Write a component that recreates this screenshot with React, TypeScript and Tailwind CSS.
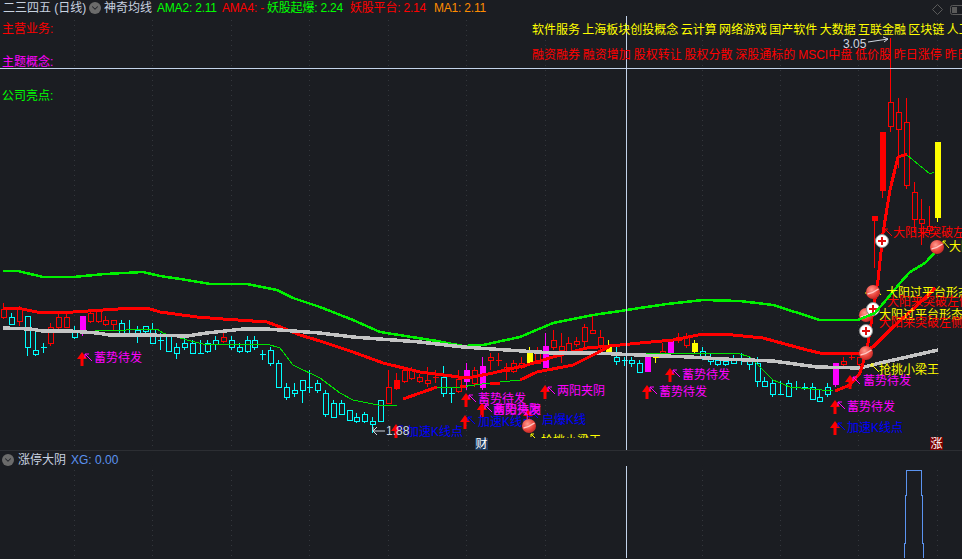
import { ChevronDown } from "lucide-react";

type Kind = "r" | "c" | "m" | "y" | "f";
type Candle = [number, number, number, number, number, Kind];

const BG = "#1b1d22";
const COLORS: Record<Kind, string> = { r: "#ff0000", c: "#00ffff", m: "#ff00ff", y: "#ffff00", f: "#ff0000" };

// candles as read off the crops: x, wick top, body top, body bottom, wick bottom
const LEFT: Candle[] = [
  [10, 129, 148, 170, 178, "r"], [34, 160, 170, 191, 191, "c"], [58, 138, 148, 182, 198, "r"],
  [82, 168, 168, 260, 288, "c"], [106, 215, 271, 282, 288, "c"], [130, 250, 262, 262, 279, "c"],
  [151, 190, 200, 250, 258, "r"], [175, 160, 170, 200, 208, "r"], [199, 155, 170, 200, 200, "r"],
  [223, 198, 212, 230, 238, "c"], [247, 168, 168, 212, 228, "m"], [271, 148, 160, 182, 188, "r"],
  [295, 148, 152, 182, 188, "r"], [316, 168, 181, 191, 198, "r"], [340, 181, 181, 191, 210, "r"],
  [364, 180, 190, 220, 220, "c"], [388, 180, 220, 220, 220, "c"], [412, 198, 210, 228, 248, "c"],
  [436, 198, 198, 212, 218, "c"], [457, 190, 208, 250, 250, "c"], [481, 220, 240, 240, 270, "c"],
  [505, 228, 228, 272, 272, "c"], [529, 250, 260, 280, 298, "c"], [553, 230, 250, 260, 270, "c"],
  [577, 240, 250, 280, 280, "c"], [601, 240, 280, 280, 280, "c"], [622, 240, 250, 272, 278, "c"],
  [646, 228, 240, 252, 270, "c"], [670, 220, 230, 242, 248, "r"], [694, 228, 240, 260, 270, "c"],
  [718, 250, 260, 272, 280, "c"], [742, 228, 240, 272, 280, "c"], [763, 228, 240, 260, 270, "c"],
  [787, 270, 282, 282, 300, "c"], [811, 260, 270, 310, 318, "c"], [835, 300, 310, 382, 382, "c"],
  [859, 370, 382, 412, 420, "c"], [883, 370, 391, 400, 410, "c"], [907, 360, 361, 391, 428, "c"],
  [928, 330, 382, 382, 400, "c"], [952, 360, 370, 391, 400, "c"],
];
const MIDDLE: Candle[] = [
  [16, 270, 280, 342, 350, "c"], [40, 300, 310, 352, 352, "c"], [64, 300, 310, 342, 342, "c"],
  [88, 330, 330, 360, 360, "c"], [109, 340, 352, 362, 368, "c"], [133, 335, 342, 362, 368, "c"],
  [157, 352, 362, 372, 400, "c"], [181, 300, 301, 362, 362, "c"], [205, 210, 262, 310, 310, "r"],
  [229, 220, 240, 264, 270, "f"], [253, 200, 210, 244, 250, "r"], [274, 200, 210, 234, 240, "r"],
  [298, 222, 232, 244, 250, "r"], [322, 200, 240, 250, 260, "r"], [346, 210, 232, 232, 250, "r"],
  [370, 198, 232, 280, 290, "c"], [394, 262, 278, 278, 308, "c"], [415, 210, 238, 272, 280, "r"],
  [439, 190, 210, 242, 270, "m"], [463, 200, 210, 250, 262, "r"], [487, 170, 198, 262, 270, "m"],
  [511, 160, 170, 180, 210, "r"], [535, 160, 180, 180, 198, "r"], [559, 190, 200, 212, 240, "r"],
  [580, 180, 190, 212, 218, "r"], [604, 170, 190, 200, 208, "r"], [628, 140, 160, 192, 192, "y"],
  [652, 140, 152, 190, 192, "r"], [676, 100, 138, 200, 200, "m"], [700, 90, 120, 140, 150, "r"],
  [724, 100, 138, 150, 190, "r"], [745, 110, 130, 152, 160, "r"], [769, 110, 122, 132, 140, "r"],
  [793, 72, 80, 122, 140, "r"], [817, 48, 90, 100, 100, "r"], [841, 90, 110, 140, 150, "r"],
  [865, 120, 140, 152, 160, "y"], [887, 140, 170, 182, 195, "c"], [911, 170, 180, 180, 198, "c"],
  [934, 170, 180, 190, 200, "c"], [958, 180, 190, 215, 218, "c"],
];
const RIGHT: Candle[] = [
  [22, 190, 200, 242, 242, "m"], [46, 190, 200, 200, 218, "y"], [67, 160, 182, 190, 190, "r"],
  [91, 150, 150, 185, 190, "m"], [115, 130, 140, 150, 160, "r"], [139, 130, 140, 165, 175, "r"],
  [163, 150, 160, 182, 190, "y"], [187, 170, 182, 200, 210, "c"], [211, 190, 200, 212, 225, "c"],
  [232, 200, 210, 222, 228, "c"], [256, 200, 212, 222, 228, "c"], [280, 195, 210, 220, 220, "c"],
  [304, 190, 205, 205, 225, "c"], [328, 200, 210, 222, 240, "c"], [352, 200, 220, 272, 290, "c"],
  [373, 262, 272, 288, 290, "c"], [397, 270, 280, 312, 320, "c"], [421, 272, 312, 312, 312, "c"],
  [445, 270, 280, 318, 320, "c"], [469, 272, 292, 292, 300, "c"], [493, 280, 292, 292, 300, "c"],
  [517, 280, 292, 328, 330, "c"], [538, 300, 322, 332, 332, "c"], [562, 280, 292, 312, 320, "c"],
  [586, 220, 220, 282, 290, "m"], [610, 200, 212, 222, 230, "r"], [634, 190, 200, 200, 210, "r"],
  [658, 200, 200, 222, 230, "r"],
];
const SPIKE: Candle[] = [
  [103, 467, 467, 480, 625, "f"], [127, 216, 216, 390, 415, "f"], [151, -66, 127, 197, 215, "r"],
  [175, 113, 157, 207, 325, "r"], [199, 113, 187, 376, 386, "r"], [223, 365, 397, 478, 520, "r"],
  [244, 417, 478, 488, 555, "r"], [268, 438, 498, 510, 525, "r"], [292, 246, 246, 470, 486, "y"],
];

const GROUPS: [number, number, Candle[]][] = [
  [0, 260, LEFT],
  [320, 300, MIDDLE],
  [640, 290, RIGHT],
  [840, 60, SPIKE],
];

const GREEN_BAND = "3,271 18,271 43,277 73,277 105,274 143,272 160,276 187,280 210,284 247,284 277,290 293,298 320,307 353,320 380,332 437,341 463,346 483,345 520,337 553,323 593,315 627,310 640,308 667,304 703,300 740,301 773,305 820,320 858,320 875,313 892,293 900,283 910,272 925,263 937,250";
const RED_BAND = "3,308 17,308 37,312 73,312 103,310 133,308 147,308 160,312 197,317 223,319 267,322 283,328 300,335 320,341 353,352 383,363 420,372 467,378 493,373 527,365 553,357 587,348 620,345 640,343 673,340 703,334 733,335 763,338 807,350 820,353 860,353 873,347 893,327 923,300 935,288";
const GRAY_BAND = "3,328 30,329 43,331 70,331 97,333 110,335 147,335 187,336 207,333 243,329 267,329 293,331 320,333 353,337 420,342 463,347 507,350 553,353 593,353 640,355 690,357 723,359 773,361 817,367 860,368 880,363 907,357 938,350";
const THIN_GREEN = [
  "8,328 30,328",
  "95,331 157,329 163,333 187,340 203,344 267,344 280,348 293,365 320,378 340,393 353,400 383,406 397,405",
  "437,387 460,387 490,383",
  "500,382 520,380",
  "597,353 660,353 737,353 750,357 773,380 790,387 833,391",
  "907,155 930,174 934,172",
];
const RED_RISE = [
  "403,399 437,387",
  "460,386 466,386",
  "490,384 500,383",
  "520,380 537,372 573,365 597,353 612,345",
  "835,391 850,385 860,373 867,350 870,330 878,280 883,233 890,190 898,157 907,154",
];

const GRID_X = [74, 152, 231, 309, 388, 466, 545, 702, 780, 858, 937];

type Mark = { ax: number; ay: number; x: number; y: number; text: string; color: string };
const MAGENTA = "#ff00ff";
const BLUE = "#0000ff";
const MARKS: Mark[] = [
  { ax: 82, ay: 359, x: 94, y: 358, text: "蓄势待发", color: MAGENTA },
  { ax: 396, ay: 431, x: 407, y: 432, text: "加速K线点", color: BLUE },
  { ax: 466, ay: 400, x: 478, y: 399, text: "蓄势待发", color: MAGENTA },
  { ax: 482, ay: 410, x: 493, y: 410, text: "蓄势待发", color: MAGENTA },
  { ax: 482, ay: 410, x: 493, y: 410, text: "两阳夹阴", color: MAGENTA },
  { ax: 465, ay: 422, x: 478, y: 422, text: "加速K线点", color: BLUE },
  { ax: 528, ay: 416, x: 542, y: 420, text: "启爆K线", color: BLUE },
  { ax: 545, ay: 392, x: 557, y: 391, text: "两阳夹阴", color: MAGENTA },
  { ax: 670, ay: 375, x: 682, y: 375, text: "蓄势待发", color: MAGENTA },
  { ax: 647, ay: 392, x: 659, y: 392, text: "蓄势待发", color: MAGENTA },
  { ax: 835, ay: 407, x: 847, y: 407, text: "蓄势待发", color: MAGENTA },
  { ax: 835, ay: 428, x: 847, y: 428, text: "加速K线点", color: BLUE },
  { ax: 850, ay: 382, x: 863, y: 381, text: "蓄势待发", color: MAGENTA },
];

const NOTES = [
  { x: 893, y: 233, text: "大阳来突破左侧", color: "#ff0000" },
  { x: 949, y: 247, text: "大阳过平台形态", color: "#ffff00" },
  { x: 886, y: 293, text: "大阳过平台形态", color: "#ffff00" },
  { x: 887, y: 302, text: "大阳来突破左侧", color: "#ff0000" },
  { x: 879, y: 315, text: "大阳过平台形态", color: "#ffff00" },
  { x: 879, y: 323, text: "大阳来突破左侧", color: "#ff0000" },
  { x: 879, y: 370, text: "抢挑小梁王", color: "#ffff00" },
];

function Candles() {
  return (
    <g shapeRendering="crispEdges">
      {GROUPS.flatMap(([ox, oy, list]) =>
        list.map(([x, wt, bt, bb, wb, kind]) => {
          const cx = Math.round(ox + x / 3) + 0.5;
          const top = Math.round(oy + bt / 3) + 0.5;
          const bottom = Math.round(oy + bb / 3) + 0.5;
          const solid = kind === "m" || kind === "y" || kind === "f";
          return (
            <g key={`${ox}-${x}`} stroke={COLORS[kind]}>
              <line x1={cx} x2={cx} y1={oy + wt / 3} y2={oy + wb / 3} />
              {top === bottom ? (
                <line x1={cx - 3} x2={cx + 3} y1={top} y2={top} />
              ) : (
                <rect x={cx - 2.5} y={top} width={5} height={bottom - top} fill={solid ? COLORS[kind] : BG} />
              )}
            </g>
          );
        }),
      )}
    </g>
  );
}

function UpArrow({ x, y, color }: { x: number; y: number; color: string }) {
  return (
    <g>
      <polygon
        fill="#ff0000"
        points={`${x},${y - 7} ${x + 5},${y} ${x + 1.5},${y} ${x + 1.5},${y + 7} ${x - 1.5},${y + 7} ${x - 1.5},${y} ${x - 5},${y}`}
      />
      <path d={`M${x + 10} ${y + 2}L${x + 3} ${y - 5}M${x + 3} ${y - 5}h4M${x + 3} ${y - 5}v4`} stroke={color} fill="none" />
    </g>
  );
}

function Ball({ x, y }: { x: number; y: number }) {
  return (
    <g>
      <circle cx={x} cy={y} r={7} fill="url(#ball)" />
      <path d={`M${x - 5.5} ${y + 2}Q${x} ${y + 1} ${x + 5.5} ${y - 3}`} stroke="#ffc8c4" strokeWidth={1.5} fill="none" />
    </g>
  );
}

function PlusBall({ x, y }: { x: number; y: number }) {
  return (
    <g>
      <circle cx={x} cy={y} r={6.5} fill="#ffffff" stroke="#8a8a8a" />
      <path d={`M${x - 4} ${y}h8M${x} ${y - 4}v8`} stroke="#e01010" strokeWidth={2} />
    </g>
  );
}

function ChevronBadge() {
  return (
    <span className="flex h-3 w-3 shrink-0 items-center justify-center rounded-full bg-[#6b6b6b]">
      <ChevronDown size={10} strokeWidth={2.5} className="text-[#22242a]" />
    </span>
  );
}

function ChartDrawing() {
  return (
    <svg width={962} height={451} className="absolute left-0 top-0">
      {GRID_X.map((x) => (
        <line key={x} x1={x + 0.5} x2={x + 0.5} y1={20} y2={451} stroke="#33363c" strokeDasharray="1 4" />
      ))}
      <Candles />
      <g fill="none" shapeRendering="crispEdges">
        <polyline points={GREEN_BAND} stroke="#00f000" strokeWidth={2.5} />
        <polyline points={RED_BAND} stroke="#ff0000" strokeWidth={3} />
        {THIN_GREEN.map((p) => (
          <polyline key={p} points={p} stroke="#00e000" strokeWidth={1} />
        ))}
        <polyline points={GRAY_BAND} stroke="#c4c4c4" strokeWidth={3.5} />
        {RED_RISE.map((p) => (
          <polyline key={p} points={p} stroke="#ff0000" strokeWidth={3} />
        ))}
      </g>
      <line x1={0} x2={962} y1={68.5} y2={68.5} stroke="#c3d3ea" />
      <line x1={626.5} x2={626.5} y1={16} y2={451} stroke="#c3d3ea" />
      <path d="M868 42L888 39M888 39l-5 -2M888 39l-4 3" stroke="#cfd6e0" fill="none" />
      <path d="M373 431h12M373 431l4 -4M373 431l4 4M373 431v-4" stroke="#cfd6e0" fill="none" />
      {MARKS.map((m, i) => (
        <UpArrow key={i} x={m.ax} y={m.ay} color={m.color} />
      ))}
      <path d="M531 434l4 4M531 434v3M531 434h3M871 364l8 8M871 364v3M871 364h3" stroke="#ffff00" fill="none" />
      <path d="M865 293h7M875 288l6 7M875 288v3M875 288h3M943 241l6 7M943 241v3M943 241h3" stroke="#ffff00" fill="none" />
      <path d="M885 229l7 7M885 229v3M885 229h3" stroke="#ff0000" fill="none" />
      <path d="M937.5 4.5l5 5l-5 5l-5 -5z" stroke="#5a5a5a" fill="none" />
      <rect x={950.5} y={5.5} width={14} height={9} rx={2} stroke="#5a5a5a" fill="none" />
      <rect x={952} y={7} width={5} height={6} fill="#5a5a5a" />
    </svg>
  );
}

// sits above the labels: the balls hide whatever text runs under them
function SignalBalls() {
  return (
    <svg width={962} height={451} className="pointer-events-none absolute left-0 top-0">
      <defs>
        <radialGradient id="ball" cx="0.4" cy="0.35" r="0.75">
          <stop offset="0" stopColor="#ff9c90" />
          <stop offset="0.6" stopColor="#e8423a" />
          <stop offset="1" stopColor="#b02020" />
        </radialGradient>
      </defs>
      <Ball x={529} y={426} />
      <Ball x={866} y={353} />
      <Ball x={866} y={315} />
      <Ball x={873} y={292} />
      <Ball x={937} y={247} />
      <PlusBall x={866} y={331} />
      <PlusBall x={873} y={309} />
      <PlusBall x={882} y={241} />
      <polyline points="858,320 875,313 892,293" fill="none" stroke="#00f000" strokeWidth={2.5} shapeRendering="crispEdges" />
    </svg>
  );
}

function Quote({ label, value, color }: { label: string; value: string; color: string }) {
  return (
    <span className="whitespace-nowrap tracking-[-0.2px]" style={{ color }}>
      {label}: {value}
    </span>
  );
}

export default function App() {
  return (
    <div className="flex h-[559px] w-[962px] flex-col overflow-hidden bg-[#1b1d22] text-[12px] leading-[16px] font-['Liberation_Sans','Noto_Sans_CJK_SC',sans-serif]">
      <div className="relative h-[451px] shrink-0 overflow-hidden border-b border-[#2c2e33]">
        <ChartDrawing />

        {/* legend */}
        <div className="relative flex h-[16px] items-center pl-[3px] text-[12px]">
          <span className="w-[86px] whitespace-nowrap text-[#c8d2e0]">二三四五 (日线)</span>
          <ChevronBadge />
          <span className="ml-[3px] w-[53px] whitespace-nowrap text-[#c8d2e0]">神奇均线</span>
          <span className="w-[65px]"><Quote label="AMA2" value="2.11" color="#00ff00" /></span>
          <span className="w-[45px]"><Quote label="AMA4" value="-" color="#ff0000" /></span>
          <span className="w-[83px]"><Quote label="妖股起爆" value="2.24" color="#00ff00" /></span>
          <span className="w-[84px]"><Quote label="妖股平台" value="2.14" color="#ff0000" /></span>
          <Quote label="MA1" value="2.11" color="#ff8c00" />
        </div>

        {/* stock info */}
        <div className="relative flex pl-[2px]">
          <div className="flex w-[530px] shrink-0 flex-col gap-[17px] pt-[5px]">
            <span className="text-[#ff0000]">主营业务:</span>
            <span className="text-[#ff00ff]">主题概念:</span>
            <span className="mt-px text-[#00ff00]">公司亮点:</span>
          </div>
          <div className="flex min-w-0 flex-col gap-[9px] pt-[6px] whitespace-nowrap">
            <span className="text-[#ffff00] [word-spacing:-1px]">软件服务 上海板块创投概念 云计算 网络游戏 国产软件 大数据 互联金融 区块链 人工智能</span>
            <span className="text-[#ff0000] [word-spacing:-0.5px]">融资融券 融资增加 股权转让 股权分散 深股通标的 MSCI中盘 低价股 昨日涨停 昨日触板</span>
          </div>
        </div>

        {/* annotations pinned to the candles */}
        {MARKS.map((m, i) => (
          <span
            key={i}
            className="absolute -translate-y-1/2 whitespace-nowrap"
            style={{ left: m.x, top: m.y, color: m.color }}
          >
            {m.text}
          </span>
        ))}
        {NOTES.map((n) => (
          <span
            key={`${n.x}-${n.y}`}
            className="absolute -translate-y-1/2 whitespace-nowrap"
            style={{ left: n.x, top: n.y, color: n.color }}
          >
            {n.text}
          </span>
        ))}
        <span className="absolute left-[843px] top-[36px] text-[#cfd6e0]">3.05</span>
        <span className="absolute left-[386px] top-[423px] text-[#cfd6e0]">1.88</span>
        <span className="absolute left-[541px] top-[433px] h-[5px] overflow-hidden whitespace-nowrap text-[#ffff00]">抢挑小梁王</span>
        <span className="absolute left-[475px] top-[438px] flex h-[12px] w-[13px] items-center justify-center bg-[#1d3a5e] text-white">财</span>
        <span className="absolute left-[930px] top-[437px] flex h-[13px] w-[13px] items-center justify-center bg-[#7a0000] text-white">涨</span>
        <SignalBalls />
      </div>

      {/* XG sub chart */}
      <div className="relative flex-1 overflow-hidden">
        <svg width={962} height={107} className="absolute left-0 top-0">
          {GRID_X.map((x) => (
            <line key={x} x1={x + 0.5} x2={x + 0.5} y1={19} y2={107} stroke="#33363c" strokeDasharray="1 4" />
          ))}
          <line x1={626.5} x2={626.5} y1={15} y2={107} stroke="#c3d3ea" />
          <polyline
            points="904.5,107 904.5,92.5 905.5,92.5 905.5,44.5 906.5,44.5 906.5,19.5 921.5,19.5 921.5,44.5 922.5,44.5 922.5,92.5 923.5,92.5 923.5,107"
            fill="none"
            stroke="#5b93f0"
            shapeRendering="crispEdges"
          />
        </svg>
        <div className="relative flex h-[17px] items-center pl-[2px]">
          <ChevronBadge />
          <span className="ml-[4px] w-[53px] whitespace-nowrap text-[#c8d2e0]">涨停大阴</span>
          <span className="text-[#5b93f0]">XG: 0.00</span>
        </div>
      </div>
    </div>
  );
}
